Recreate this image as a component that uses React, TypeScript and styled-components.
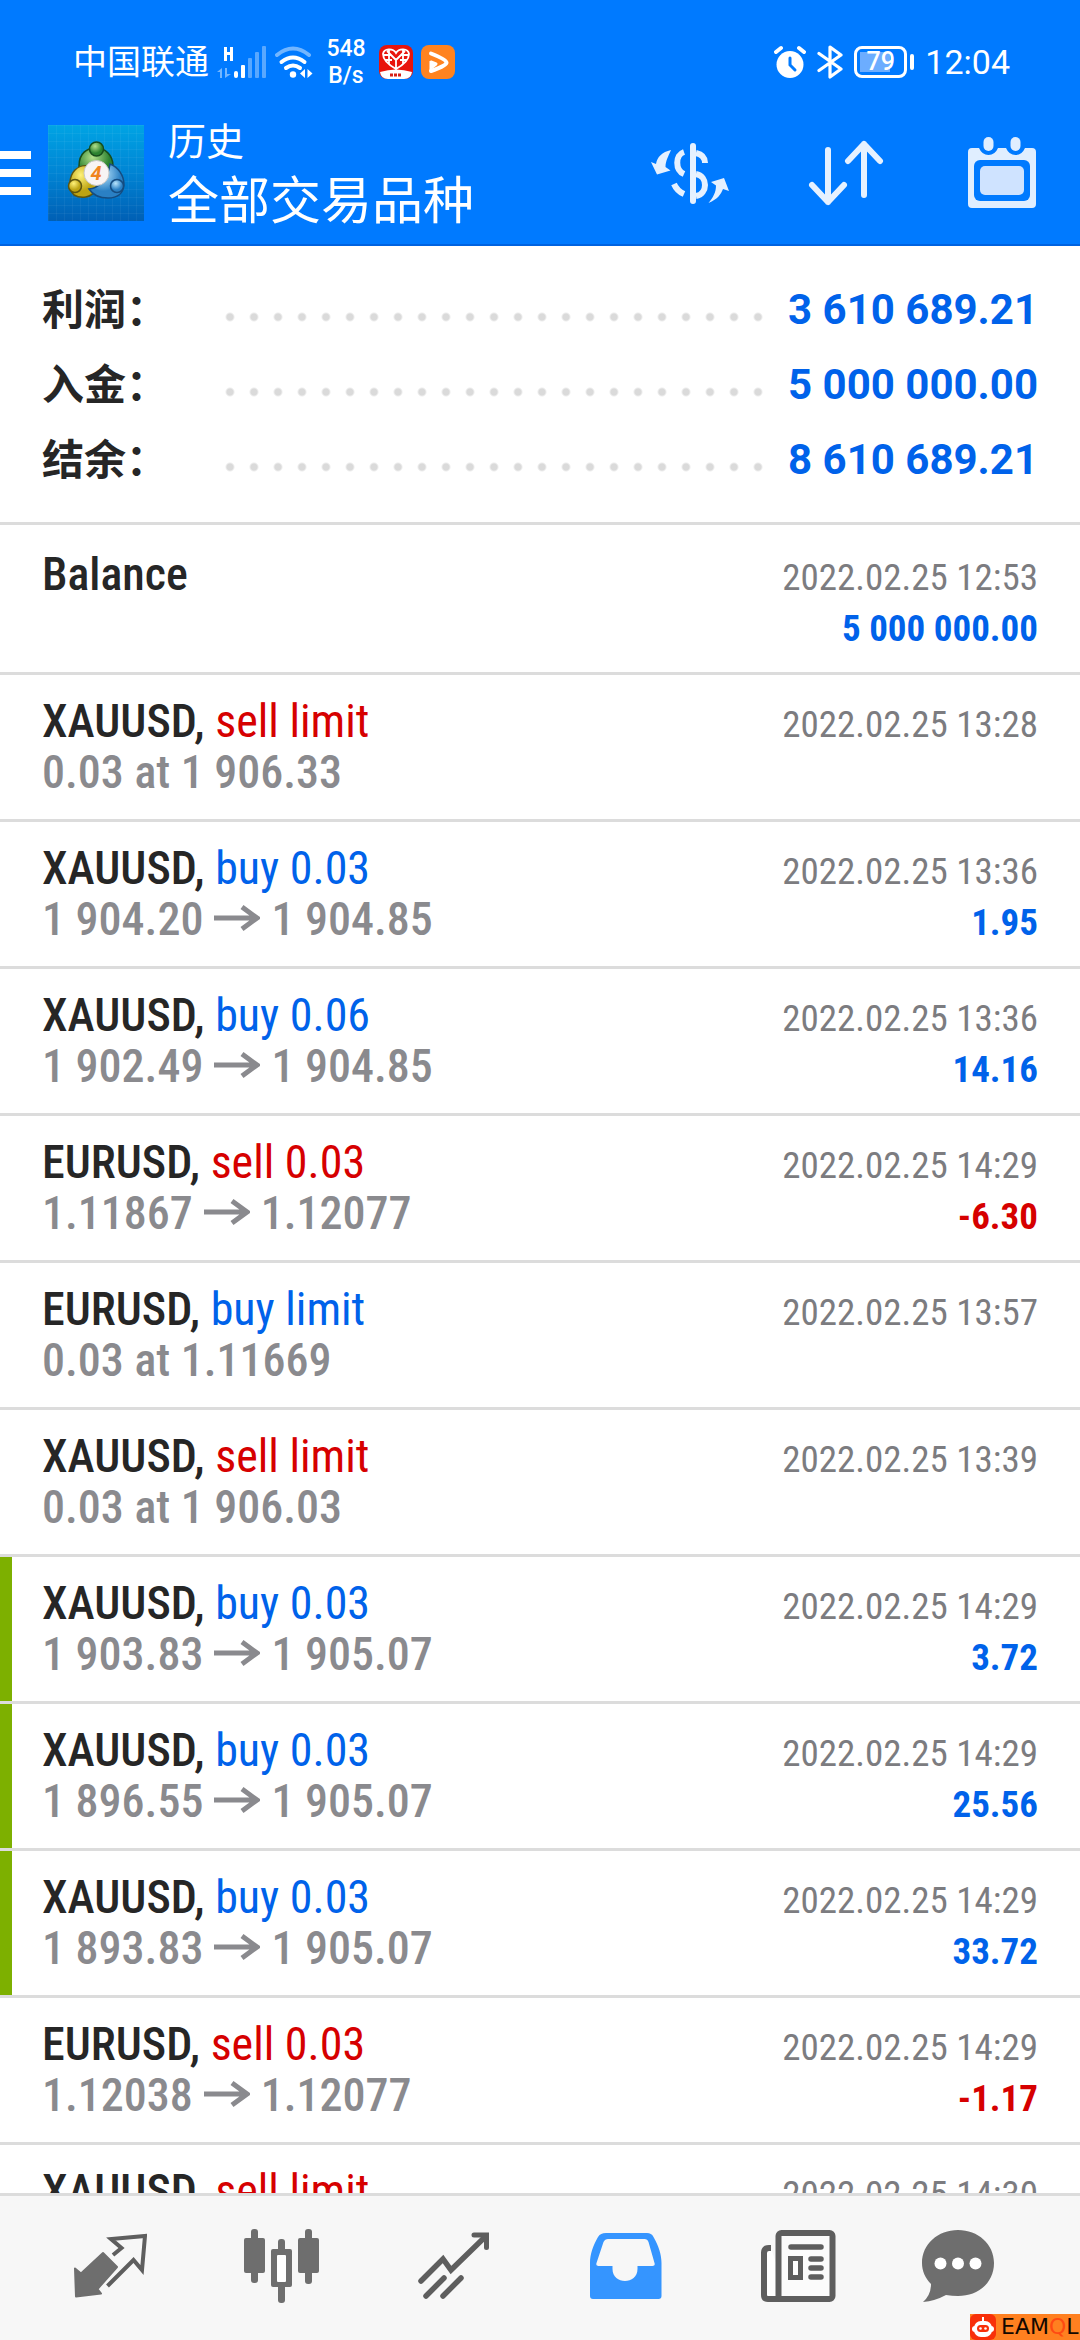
import React from 'react';
import styled, { createGlobalStyle } from 'styled-components';

const colors = {
  bar: '#007aff',
  barEdge: '#0063e0',
  ink: '#262626',
  muted: '#8a8a8e',
  date: '#7c7c80',
  buy: '#0062ea',
  sell: '#d60000',
  line: '#dcdcdc',
  marker: '#7db000',
  nav: '#f7f7f7',
  icon: '#6e6e6e',
  iconDark: '#5e5e5e',
};

const condensed = '"Roboto Condensed", Roboto, "Noto Sans CJK SC", sans-serif';
const regular = 'Roboto, "Noto Sans CJK SC", sans-serif';

const GlobalStyle = createGlobalStyle`
  *, *::before, *::after { box-sizing: border-box; }
  body { margin: 0; background: #fff; font-family: ${regular}; }
  button { border: 0; padding: 0; margin: 0; background: none; font: inherit; color: inherit; cursor: pointer; }
  h1, p, dl, dt, dd, ul { margin: 0; padding: 0; font-weight: inherit; }
  svg { display: block; flex: none; }
`;

const Page = styled.div`
  position: relative;
  display: flex;
  flex-direction: column;
  height: 100vh;
  overflow: hidden;
`;

const TopArea = styled.header`
  flex: none;
  background: ${colors.bar};
  border-bottom: 2px solid ${colors.barEdge};
  color: #fff;
`;

const StatusBar = styled.div`
  display: flex;
  align-items: center;
  justify-content: space-between;
  height: 102px;
  padding: 22px 70px 0 73px;
`;

const StatusGroup = styled.div<{ $gap: number }>`
  display: flex;
  align-items: center;
  gap: ${(p) => p.$gap}px;
`;

const Carrier = styled.span`
  font-size: 34px;
  line-height: 40px;
`;

const NetSpeed = styled.span`
  width: 40px;
  margin: 0 5px;
  font-size: 23px;
  font-weight: 500;
  line-height: 27px;
  text-align: center;
`;

const Clock = styled.time`
  font-size: 34px;
  line-height: 40px;
`;

const Battery = styled.div`
  display: flex;
  align-items: center;
  gap: 3px;

  &::after {
    content: '';
    width: 4px;
    height: 16px;
    border-radius: 2px;
    background: #fff;
  }
`;

const BatteryCell = styled.span`
  display: flex;
  align-items: center;
  justify-content: center;
  width: 53px;
  height: 32px;
  border: 3px solid #fff;
  border-radius: 8px;
  background: linear-gradient(90deg, #6cadff 72%, transparent 72%) center / 41px 20px no-repeat;
  font-size: 25px;
  font-weight: 500;
  line-height: 26px;
`;

const AppBar = styled.div`
  display: flex;
  align-items: center;
  height: 142px;
`;

const MenuButton = styled.button`
  display: flex;
  align-items: center;
  width: 48px;
  height: 96px;
`;

const Titles = styled.div`
  flex: 1;
  padding-left: 24px;
`;

const Title = styled.h1`
  font-size: 38px;
  line-height: 58px;
`;

const Subtitle = styled.p`
  font-size: 51px;
  line-height: 62px;
`;

const BarButton = styled.button`
  display: flex;
  align-items: center;
  justify-content: center;
  width: 156px;
  height: 142px;
`;

const Summary = styled.dl`
  flex: none;
  padding: 26px 42px 25px;
  border-bottom: 3px solid ${colors.line};
`;

const SummaryRow = styled.div`
  display: flex;
  align-items: center;
  height: 75px;
`;

const SummaryLabel = styled.dt`
  width: 176px;
  padding-bottom: 6px;
  color: ${colors.ink};
  font-size: 42px;
  font-weight: 700;
  white-space: nowrap;
`;

const Leader = styled.div`
  flex: 1;
  height: 24px;
  margin-top: 14px;
  background: radial-gradient(circle, #dadada 3px, transparent 5px) left center / 24px 24px round;
`;

const SummaryValue = styled.dd`
  width: 268px;
  color: ${colors.buy};
  font-size: 42px;
  font-weight: 700;
  text-align: right;
`;

const List = styled.ul`
  flex: 1;
  min-height: 0;
  overflow: hidden;
  list-style: none;
  font-family: ${condensed};
`;

const Item = styled.li<{ $lead?: boolean }>`
  display: flex;
  height: ${(p) => (p.$lead ? 150 : 147)}px;
  border-bottom: 3px solid ${colors.line};
`;

const Marker = styled.span<{ $on?: boolean }>`
  width: 12px;
  background: ${(p) => (p.$on ? colors.marker : 'transparent')};
`;

const ItemBody = styled.div<{ $lead?: boolean }>`
  flex: 1;
  padding: ${(p) => (p.$lead ? 24 : 21)}px 42px 0 30px;
`;

const Line = styled.div`
  display: flex;
  align-items: baseline;
  justify-content: space-between;
  height: 51px;
  line-height: 51px;
  white-space: nowrap;
`;

const Name = styled.span`
  color: ${colors.ink};
  font-size: 46px;
  font-weight: 500;
`;

const Side = styled.span<{ $sell?: boolean }>`
  color: ${(p) => (p.$sell ? colors.sell : colors.buy)};
  font-weight: 400;
`;

const Price = styled.span`
  color: ${colors.muted};
  font-size: 46px;
  font-weight: 500;

  &::before { content: '\\200b'; }
`;

const Arrow = styled.svg`
  display: inline-block;
  margin: 0 11px;
`;

const Stamp = styled.time`
  color: ${colors.date};
  font-size: 37px;
`;

const Amount = styled.span<{ $loss?: boolean }>`
  color: ${(p) => (p.$loss ? colors.sell : colors.buy)};
  font-size: 37px;
  font-weight: 700;
`;

const NavBar = styled.nav`
  display: flex;
  flex: none;
  height: 147px;
  padding: 0 24px 4px;
  border-top: 3px solid ${colors.line};
  background: ${colors.nav};
`;

const NavButton = styled.button`
  display: flex;
  flex: 1;
  align-items: center;
  justify-content: center;
`;

const Watermark = styled.div`
  position: absolute;
  right: 0;
  bottom: 0;
  display: flex;
  align-items: center;
  gap: 5px;
  width: 110px;
  height: 26px;
  background: #ff8020;
  color: #140800;
  font-family: "DejaVu Sans", sans-serif;
  font-size: 22px;
  line-height: 26px;
`;

const WatermarkAccent = styled.span`
  color: #ff4a12;
`;

interface Deal {
  name: string;
  side?: 'buy' | 'sell';
  detail?: string;
  open?: string;
  close?: string;
  time: string;
  amount?: string;
  marked?: boolean;
}

const summary = [
  ['利润：', '3 610 689.21'],
  ['入金：', '5 000 000.00'],
  ['结余：', '8 610 689.21'],
];

const deals: Deal[] = [
  { name: 'Balance', time: '2022.02.25 12:53', amount: '5 000 000.00' },
  { name: 'XAUUSD', side: 'sell', detail: 'limit', open: '0.03 at 1 906.33', time: '2022.02.25 13:28' },
  { name: 'XAUUSD', side: 'buy', detail: '0.03', open: '1 904.20', close: '1 904.85', time: '2022.02.25 13:36', amount: '1.95' },
  { name: 'XAUUSD', side: 'buy', detail: '0.06', open: '1 902.49', close: '1 904.85', time: '2022.02.25 13:36', amount: '14.16' },
  { name: 'EURUSD', side: 'sell', detail: '0.03', open: '1.11867', close: '1.12077', time: '2022.02.25 14:29', amount: '-6.30' },
  { name: 'EURUSD', side: 'buy', detail: 'limit', open: '0.03 at 1.11669', time: '2022.02.25 13:57' },
  { name: 'XAUUSD', side: 'sell', detail: 'limit', open: '0.03 at 1 906.03', time: '2022.02.25 13:39' },
  { name: 'XAUUSD', side: 'buy', detail: '0.03', open: '1 903.83', close: '1 905.07', time: '2022.02.25 14:29', amount: '3.72', marked: true },
  { name: 'XAUUSD', side: 'buy', detail: '0.03', open: '1 896.55', close: '1 905.07', time: '2022.02.25 14:29', amount: '25.56', marked: true },
  { name: 'XAUUSD', side: 'buy', detail: '0.03', open: '1 893.83', close: '1 905.07', time: '2022.02.25 14:29', amount: '33.72', marked: true },
  { name: 'EURUSD', side: 'sell', detail: '0.03', open: '1.12038', close: '1.12077', time: '2022.02.25 14:29', amount: '-1.17' },
  { name: 'XAUUSD', side: 'sell', detail: 'limit', time: '2022.02.25 14:30' },
];

const SignalIcon = () => (
  <svg width="50" height="34" viewBox="214 44 50 34" fill="#fff">
    <path d="M221 46h3v5h3v-5h3v14h-3v-6h-3v6h-3z" />
    <path d="M219 67v10h-2v-6h-3zM222 77V67h2v6h4z" opacity=".45" />
    <rect x="231" y="70" width="4" height="7" rx="2" />
    <rect x="238" y="64" width="4" height="13" rx="1" />
    <g opacity=".35">
      <rect x="245" y="57" width="4" height="20" rx="1" />
      <rect x="252" y="51" width="4" height="26" rx="1" />
      <rect x="259" y="45" width="4" height="32" rx="1" />
    </g>
  </svg>
);

const WifiIcon = () => (
  <svg width="38" height="34" viewBox="273 44 38 34" fill="none" stroke="#fff" strokeLinecap="round" strokeWidth="4">
    <path d="M275 54q16-13 32 0" opacity=".45" />
    <path d="M279.500 61q11.500-9 23 0" />
    <path d="M284 67q7-5 14 0" />
    <circle cx="291" cy="73.500" r="3.200" fill="#fff" stroke="none" />
    <path d="M303 68v9l-5-4.500zM305.500 68v9l5-4.500z" fill="#fff" stroke="none" />
  </svg>
);

const HeartAppIcon = () => (
  <svg width="34" height="34" viewBox="0 0 34 34">
    <rect width="34" height="34" rx="8" fill="#e8140c" />
    <path d="M1 27q16-5 32 0-1 7-8 7H9q-7 0-8-7z" fill="#fff" />
    <path d="M17 26V15M17 8c-3-5-12-5-13 1 0 6 6 11 13 15 7-4 13-9 13-15-1-6-10-6-13-1zM5 10h7M22 10h7M6 15h7M21 15h7M10 4v15M24 4v15M17 15 8 6M17 15l9-9" fill="none" stroke="#fff" strokeWidth="1.800" />
    <path d="M11 30h12" stroke="#d62018" strokeWidth="3" strokeDasharray="3 1" />
  </svg>
);

const PlayAppIcon = () => (
  <svg width="34" height="34" viewBox="0 0 34 34">
    <rect width="34" height="34" rx="8" fill="#ff8320" />
    <path d="M10 8.500q15 6 15.500 9T10 26" fill="none" stroke="#fff" strokeWidth="4" strokeLinecap="round" strokeLinejoin="round" />
    <path d="M10 16v10M10 17l5 2-5 4z" fill="#fff" stroke="#fff" strokeWidth="3" strokeLinejoin="round" />
  </svg>
);

const AlarmIcon = () => (
  <svg width="32" height="34" viewBox="0 0 32 34" fill="none" stroke="#fff" strokeLinecap="round">
    <circle cx="16" cy="19.500" r="13.500" fill="#fff" stroke="none" />
    <path d="M2 7 7 3M30 7l-5-4" strokeWidth="4" />
    <path d="M16 13v7l5 5" stroke={colors.bar} strokeWidth="3" />
  </svg>
);

const BluetoothIcon = () => (
  <svg width="26" height="34" viewBox="0 0 26 34" fill="none" stroke="#fff" strokeWidth="3.200" strokeLinecap="round" strokeLinejoin="round">
    <path d="M2 8.500 24 24l-11 8V2l11 8L2 25.500" />
  </svg>
);

const MenuIcon = () => (
  <svg width="31" height="44" viewBox="0 0 31 44" fill="#fff">
    <path d="M0 0h31v8H0zM0 18h31v8H0zM0 36h31v8H0z" />
  </svg>
);

const AppLogo = () => (
  <svg width="96" height="96" viewBox="0 0 96 96">
    <defs>
      <linearGradient id="tile" x1="0" y1="0" x2="0" y2="1">
        <stop offset="0" stopColor="#00a4e4" />
        <stop offset=".5" stopColor="#0084d4" />
        <stop offset="1" stopColor="#005fb4" />
      </linearGradient>
      <pattern id="mesh" width="8" height="8" patternUnits="userSpaceOnUse">
        <path d="M8 0H0v8" fill="none" stroke="#fff" strokeOpacity=".09" />
      </pattern>
      <radialGradient id="green" cx=".4" cy=".3"><stop offset="0" stopColor="#b4e08c" /><stop offset="1" stopColor="#2c8230" /></radialGradient>
      <radialGradient id="yellow" cx=".4" cy=".3"><stop offset="0" stopColor="#fff27a" /><stop offset="1" stopColor="#bda414" /></radialGradient>
      <radialGradient id="blue" cx=".4" cy=".3"><stop offset="0" stopColor="#b8e4fc" /><stop offset="1" stopColor="#2a80c4" /></radialGradient>
    </defs>
    <rect width="96" height="96" fill="url(#tile)" />
    <rect width="96" height="96" fill="url(#mesh)" />
    <g strokeWidth="1.500">
      <path d="M31 41c0-13 8-18 17-18s17 7 17 18c0 7-4 12-8 13L39 54c-5-2-8-7-8-13z" fill="url(#green)" stroke="#174d1c" />
      <path d="M48 65c-5 8-15 9-22 5-6-6-5-19 1-25 5-5 11-5 15-3 4 7 8 15 6 23z" fill="url(#yellow)" stroke="#5d5510" />
      <path d="M62 39c8 3 14 11 14 21-1 9-7 13-16 13-8 0-15-3-19-9 8 0 19-9 21-25z" fill="url(#blue)" stroke="#154c80" />
      <circle cx="48.500" cy="24" r="7" fill="url(#green)" stroke="#174d1c" />
      <circle cx="27" cy="61" r="6.500" fill="url(#yellow)" stroke="#5d5510" />
      <circle cx="69" cy="61" r="6.500" fill="url(#blue)" stroke="#154c80" />
    </g>
    <circle cx="48.500" cy="48" r="12.500" fill="#f8f4f4" stroke="#c8c8c8" />
    <text x="48" y="55" fill="#f08420" fontFamily="Roboto, sans-serif" fontSize="20" fontStyle="italic" fontWeight="700" textAnchor="middle">4</text>
  </svg>
);

const CurrencyIcon = () => (
  <svg width="80" height="64" viewBox="650 140 80 64" fill="#e6f1ff">
    <path d="M671 149C662 151 657 156 656 163l-5-2 6 12.500 13.500-4-5-3.500c0-6 3-11 5.500-17z" />
    <path d="M708.500 202C718 198 721 193 723 188l6 2-5-13-13 4 5 3.500c0 7-3 12-7.500 17.500z" />
    <rect x="690" y="142" width="6" height="61" rx="3" />
    <g fill="none" stroke="#e6f1ff" strokeWidth="6">
      <path d="M684 151c-9 3-9 18 0 22M674 183q3 7 10 10M696 152q9 2 9 10M696 173c12 2 12 20 0 22" />
    </g>
  </svg>
);

const SortIcon = () => (
  <svg width="76" height="66" viewBox="808 141 76 66" fill="none" stroke="#e6f1ff" strokeWidth="6" strokeLinecap="round" strokeLinejoin="round">
    <path d="M828 151v52M812 186l16 17 16-17M864 196v-51M848 162l16-17 16 17" />
  </svg>
);

const CalendarIcon = () => (
  <svg width="68" height="72" viewBox="968 137 68 72">
    <path d="M972 148h7q3 7 9.500 7t9.500-7h8q3 7 9.500 7t9.500-7h7q4 0 4 4v52q0 4-4 4h-60q-4 0-4-4v-52q0-4 4-4z" fill="#e0eeff" />
    <rect x="974" y="160" width="56" height="41" rx="6" fill={colors.bar} />
    <rect x="980" y="166" width="44" height="29" rx="5" fill="#cfe3ff" />
    <rect x="983.500" y="137" width="10" height="14" rx="5" fill="#e0eeff" />
    <rect x="1010.500" y="137" width="10" height="14" rx="5" fill="#e0eeff" />
  </svg>
);

const QuotesIcon = () => (
  <svg width="74" height="72" viewBox="73 2230 74 72">
    <path d="M103 2253l14 14-19.500 22 3.500 4.500-25 3-1-28 6 5z" fill={colors.icon} stroke={colors.icon} strokeWidth="2" strokeLinejoin="round" />
    <path d="M113 2255l8.500-7-10.500-9 34-3-3 34-8.500-10-26 26" fill="none" stroke={colors.iconDark} strokeWidth="4" />
  </svg>
);

const CandlesIcon = () => (
  <svg width="78" height="76" viewBox="243 2228 78 76" fill={colors.icon}>
    <rect x="251" y="2229" width="7" height="54" rx="3" />
    <rect x="244" y="2238" width="21" height="35" rx="2" />
    <rect x="278" y="2239" width="7" height="64" rx="3" />
    <rect x="271" y="2249" width="21" height="38" rx="2" />
    <rect x="277" y="2255" width="9" height="27" rx="1" fill="#fff" />
    <rect x="305" y="2229" width="7" height="55" rx="3" />
    <rect x="298" y="2238" width="21" height="35" rx="2" />
  </svg>
);

const TradeIcon = () => (
  <svg width="74" height="72" viewBox="417 2230 74 72" fill="none" stroke={colors.iconDark} strokeWidth="5.500" strokeLinecap="round">
    <path d="M421 2281l22-22 8 11 35-34M426 2296l18-18M443 2296l18-18" />
    <path d="M474 2235h12.500v12.500" strokeWidth="5" />
  </svg>
);

const HistoryIcon = () => (
  <svg width="72" height="72" viewBox="591 2229 72 72">
    <path fillRule="evenodd" d="M607 2232h41c3 0 5 1 6.500 4 5 9 8 17 8 26v33q0 3-3 3h-65.500q-3 0-3-3v-33c0-9 3-17 8-26 2-3 4-4 8-4zM609 2238q-3 0-4.500 3l-7 21q-1 3 2 3h14v3c0 16 25 16 25 0v-3h15q3 0 2-3l-6-21q-1-3-4-3z" fill="#3595ff" />
  </svg>
);

const NewsIcon = () => (
  <svg width="76" height="74" viewBox="762 2228 76 74" fill="none" stroke={colors.iconDark}>
    <path d="M773 2247h-2q-5 0-5 5v42q0 4 4 4h20" strokeWidth="6" fill="#fff" />
    <rect x="780.500" y="2232" width="54" height="66" rx="3" strokeWidth="6" fill="#fbfbfb" />
    <path d="M793 2246h30M813 2258h10M813 2267h10M813 2276h10" strokeWidth="5.500" strokeLinecap="round" />
    <rect x="792.500" y="2257.500" width="10" height="19" strokeWidth="5" fill="#fff" />
  </svg>
);

const ChatIcon = () => (
  <svg width="98" height="74" viewBox="921 2228 98 74">
    <path d="M958 2229c20 0 36 14 36 33 0 20-16 33-36 33q-6 0-12-1-11 6-23 7 8-7 8-18c-6-6-9-13-9-21 0-19 16-33 36-33z" fill={colors.icon} />
    <g fill="#fff">
      <circle cx="940.500" cy="2262.500" r="6" />
      <circle cx="958" cy="2262.500" r="6" />
      <circle cx="975.500" cy="2262.500" r="6" />
    </g>
  </svg>
);

const RobotIcon = () => (
  <svg width="26" height="26" viewBox="0 0 26 26">
    <rect width="26" height="26" rx="6" fill="#f8300a" />
    <path d="M12 3h2v5h-2z" fill="#fff" />
    <rect x="2" y="12" width="22" height="6" rx="3" fill="#fff" />
    <rect x="4" y="7" width="18" height="16" rx="7" fill="#fff" />
    <rect x="7" y="11" width="12" height="7" rx="3.500" fill="#f8300a" />
    <circle cx="10.500" cy="14.500" r="1.300" fill="#fff" />
    <circle cx="15.500" cy="14.500" r="1.300" fill="#fff" />
  </svg>
);

const PriceArrow = () => (
  <Arrow width="46" height="30" viewBox="0 0 46 30" fill="none" stroke={colors.muted} strokeWidth="5" role="img" aria-label="to">
    <path d="M0 13h43M28 2l15 11-15 11" />
  </Arrow>
);

const navItems = [
  { label: 'Quotes', icon: <QuotesIcon /> },
  { label: 'Charts', icon: <CandlesIcon /> },
  { label: 'Trade', icon: <TradeIcon /> },
  { label: 'History', icon: <HistoryIcon /> },
  { label: 'News', icon: <NewsIcon /> },
  { label: 'Messages', icon: <ChatIcon /> },
];

function DealItem({ deal, lead }: { deal: Deal; lead: boolean }) {
  return (
    <Item $lead={lead}>
      <Marker $on={deal.marked} />
      <ItemBody $lead={lead}>
        <Line>
          <Name>
            {deal.side ? `${deal.name}, ` : deal.name}
            {deal.side && <Side $sell={deal.side === 'sell'}>{`${deal.side} ${deal.detail}`}</Side>}
          </Name>
          <Stamp>{deal.time}</Stamp>
        </Line>
        <Line>
          <Price>
            {deal.open}
            {deal.close && <PriceArrow />}
            {deal.close}
          </Price>
          {deal.amount && <Amount $loss={deal.amount.startsWith('-')}>{deal.amount}</Amount>}
        </Line>
      </ItemBody>
    </Item>
  );
}

export default function App() {
  return (
    <Page>
      <GlobalStyle />
      <TopArea>
        <StatusBar>
          <StatusGroup $gap={8}>
            <Carrier>中国联通</Carrier>
            <SignalIcon />
            <WifiIcon />
            <NetSpeed>548 B/s</NetSpeed>
            <HeartAppIcon />
            <PlayAppIcon />
          </StatusGroup>
          <StatusGroup $gap={11}>
            <AlarmIcon />
            <BluetoothIcon />
            <Battery>
              <BatteryCell>79</BatteryCell>
            </Battery>
            <Clock>12:04</Clock>
          </StatusGroup>
        </StatusBar>
        <AppBar>
          <MenuButton aria-label="Menu"><MenuIcon /></MenuButton>
          <AppLogo />
          <Titles>
            <Title>历史</Title>
            <Subtitle>全部交易品种</Subtitle>
          </Titles>
          <BarButton aria-label="Symbols"><CurrencyIcon /></BarButton>
          <BarButton aria-label="Sort"><SortIcon /></BarButton>
          <BarButton aria-label="Period"><CalendarIcon /></BarButton>
        </AppBar>
      </TopArea>

      <Summary>
        {summary.map(([label, value]) => (
          <SummaryRow key={label}>
            <SummaryLabel>{label}</SummaryLabel>
            <Leader />
            <SummaryValue>{value}</SummaryValue>
          </SummaryRow>
        ))}
      </Summary>

      <List>
        {deals.map((deal, i) => (
          <DealItem key={i} deal={deal} lead={i === 0} />
        ))}
      </List>

      <NavBar>
        {navItems.map((item) => (
          <NavButton key={item.label} aria-label={item.label}>{item.icon}</NavButton>
        ))}
      </NavBar>

      <Watermark>
        <RobotIcon />
        <span>EAM<WatermarkAccent>Q</WatermarkAccent>L</span>
      </Watermark>
    </Page>
  );
}
